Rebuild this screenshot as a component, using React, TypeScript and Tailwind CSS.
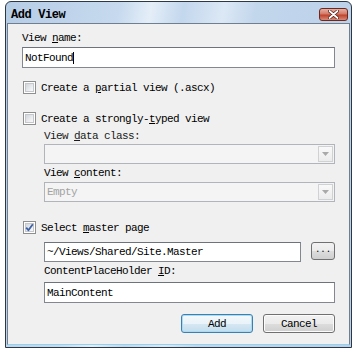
import React from 'react';

const mono = { fontFamily: '"Liberation Mono", "DejaVu Sans Mono", monospace' };

function CheckBox({ checked }: { checked?: boolean }) {
  return (
    <div className="w-[13px] h-[13px] shrink-0 border border-[#8e8f8f] bg-white p-[1px]">
      <div className="relative w-full h-full border border-[#c4c7cb] bg-[linear-gradient(135deg,#d3d6da_0%,#eef0f2_70%,#f8f8f8_100%)]">
        {checked && (
          <svg className="absolute -left-[1px] -top-[1px]" width="9" height="9" viewBox="0 0 9 9">
            <path d="M1.2 4.6 L3.4 7.2 L7.8 1.2" fill="none" stroke="#3c62a8" strokeWidth="1.8" strokeLinejoin="round" />
          </svg>
        )}
      </div>
    </div>
  );
}

function Combo({ value }: { value?: string }) {
  return (
    <div className="w-[291px] h-[20px] flex items-center justify-between border border-[#b1b5ba] bg-[#f4f4f4] pl-[2px] pr-[1px]">
      <span className="text-[11px] leading-[12px] tracking-[-0.6px] text-[#a3a3a3]">{value}</span>
      <div className="w-[15px] h-[16px] flex items-center justify-center border border-[#cfd1d3] bg-[linear-gradient(#f9f9f9,#ececec)]">
        <svg width="7" height="4" viewBox="0 0 7 4">
          <path d="M0 0 H7 L3.5 4 Z" fill="#a9a9a9" />
        </svg>
      </div>
    </div>
  );
}

function TextBox({ value, w }: { value: string; w: string }) {
  return (
    <div className={`${w} flex items-center border border-[#828790] border-t-[#6d737a] bg-white pl-[2px]`}>
      <span className="text-[11px] leading-[12px] tracking-[-0.6px] text-black">{value}</span>
    </div>
  );
}

export default function App() {
  return (
    <div className="w-[356px] h-[357px] bg-white pl-[5px] pt-[1px]" style={mono}>
      <div className="w-[347px] h-[347px] flex flex-col rounded-t-[6px] border border-[#2c3845] bg-[linear-gradient(100deg,#b6cde6_0%,#c6d9ee_28%,#e4eef8_36%,#c3d7ed_44%,#dce8f5_54%,#c2d6ec_62%,#bad0e8_100%)]">
        {/* title bar */}
        <div className="h-[21px] flex items-start justify-between pl-[5px] pr-[3px]">
          <span className="mt-[7px] text-[12px] leading-[12px] font-bold tracking-[-0.4px] text-black">Add View</span>
          <div className="mt-[6px] w-[29px] h-[13px] flex items-center justify-center rounded-[3px] border border-[#6b2a20] bg-[linear-gradient(#e8b0a4_0%,#d47a68_45%,#c0432c_55%,#d88a78_100%)]">
            <svg width="11" height="9" viewBox="0 0 11 9">
              <path d="M1.5 1 L9.5 8 M9.5 1 L1.5 8" stroke="#4b1a12" strokeWidth="3.2" strokeLinecap="round" />
              <path d="M1.5 1 L9.5 8 M9.5 1 L1.5 8" stroke="#ffffff" strokeWidth="1.8" strokeLinecap="round" />
            </svg>
          </div>
        </div>

        {/* client area */}
        <div className="flex-1 mx-[1px] mb-[2px] flex flex-col border border-[#6f7f8f] border-b-[#8fd3ee] bg-[#f0f0f0] pl-[14px] text-[11px] leading-[12px] tracking-[-0.6px] text-black">
          <div className="mt-[8px] h-[12px]">
            View <u className="underline-offset-1">n</u>ame:
          </div>
          <div className="mt-[3px]">
            <div className="w-[313px] h-[21px] flex items-center border border-[#828790] border-t-[#6d737a] bg-white pl-[2px]">
              <span>NotFound</span>
              <span className="w-[1px] h-[12px] bg-black" />
            </div>
          </div>

          <div className="mt-[13px] ml-[1px] h-[13px] flex items-center gap-[5px]">
            <CheckBox />
            <span>
              Create a <u className="underline-offset-1">p</u>artial view (.ascx)
            </span>
          </div>

          <div className="mt-[18px] ml-[1px] h-[13px] flex items-center gap-[5px]">
            <CheckBox />
            <span>
              Create a strongly-<u className="underline-offset-1">t</u>yped view
            </span>
          </div>

          <div className="ml-[22px] flex flex-col">
            <div className="mt-[5px] h-[12px] text-[#1a1a1a]">
              View <u className="underline-offset-1">d</u>ata class:
            </div>
            <div className="mt-[2px]">
              <Combo />
            </div>
            <div className="mt-[3px] h-[12px]">
              View <u className="underline-offset-1">c</u>ontent:
            </div>
            <div className="mt-[3px]">
              <Combo value="Empty" />
            </div>
          </div>

          <div className="mt-[19px] ml-[1px] h-[13px] flex items-center gap-[5px]">
            <CheckBox checked />
            <span>
              Select <u className="underline-offset-1">m</u>aster page
            </span>
          </div>

          <div className="ml-[22px] flex flex-col">
            <div className="mt-[8px] flex items-start gap-[10px]">
              <TextBox value="~/Views/Shared/Site.Master" w="w-[257px] h-[20px]" />
              <div className="w-[24px] h-[18px] flex items-center justify-center rounded-[3px] border border-[#707070] bg-[linear-gradient(#f2f2f2_0%,#ebebeb_50%,#dddddd_51%,#cfcfcf_100%)] text-[9px] leading-[9px] tracking-normal pb-[2px]">
                ...
              </div>
            </div>
            <div className="mt-[3px] h-[12px]">
              ContentPlaceHolder <u className="underline-offset-1">I</u>D:
            </div>
            <div className="mt-[5px]">
              <TextBox value="MainContent" w="w-[291px] h-[21px]" />
            </div>
          </div>

          <div className="mt-[11px] ml-[159px] flex gap-[10px]">
            <div className="w-[72px] h-[19px] flex items-center justify-center rounded-[3px] border border-[#3c7fb1] bg-[linear-gradient(#f4f9fc_0%,#e9f3f9_50%,#d6e8f3_51%,#c4dced_100%)] shadow-[inset_0_0_0_1px_#a8dcf3]">
              Add
            </div>
            <div className="w-[72px] h-[19px] flex items-center justify-center rounded-[3px] border border-[#707070] bg-[linear-gradient(#f2f2f2_0%,#ebebeb_50%,#dddddd_51%,#cfcfcf_100%)] shadow-[inset_0_0_0_1px_#fcfcfc]">
              Cancel
            </div>
          </div>
        </div>
      </div>
    </div>
  );
}
